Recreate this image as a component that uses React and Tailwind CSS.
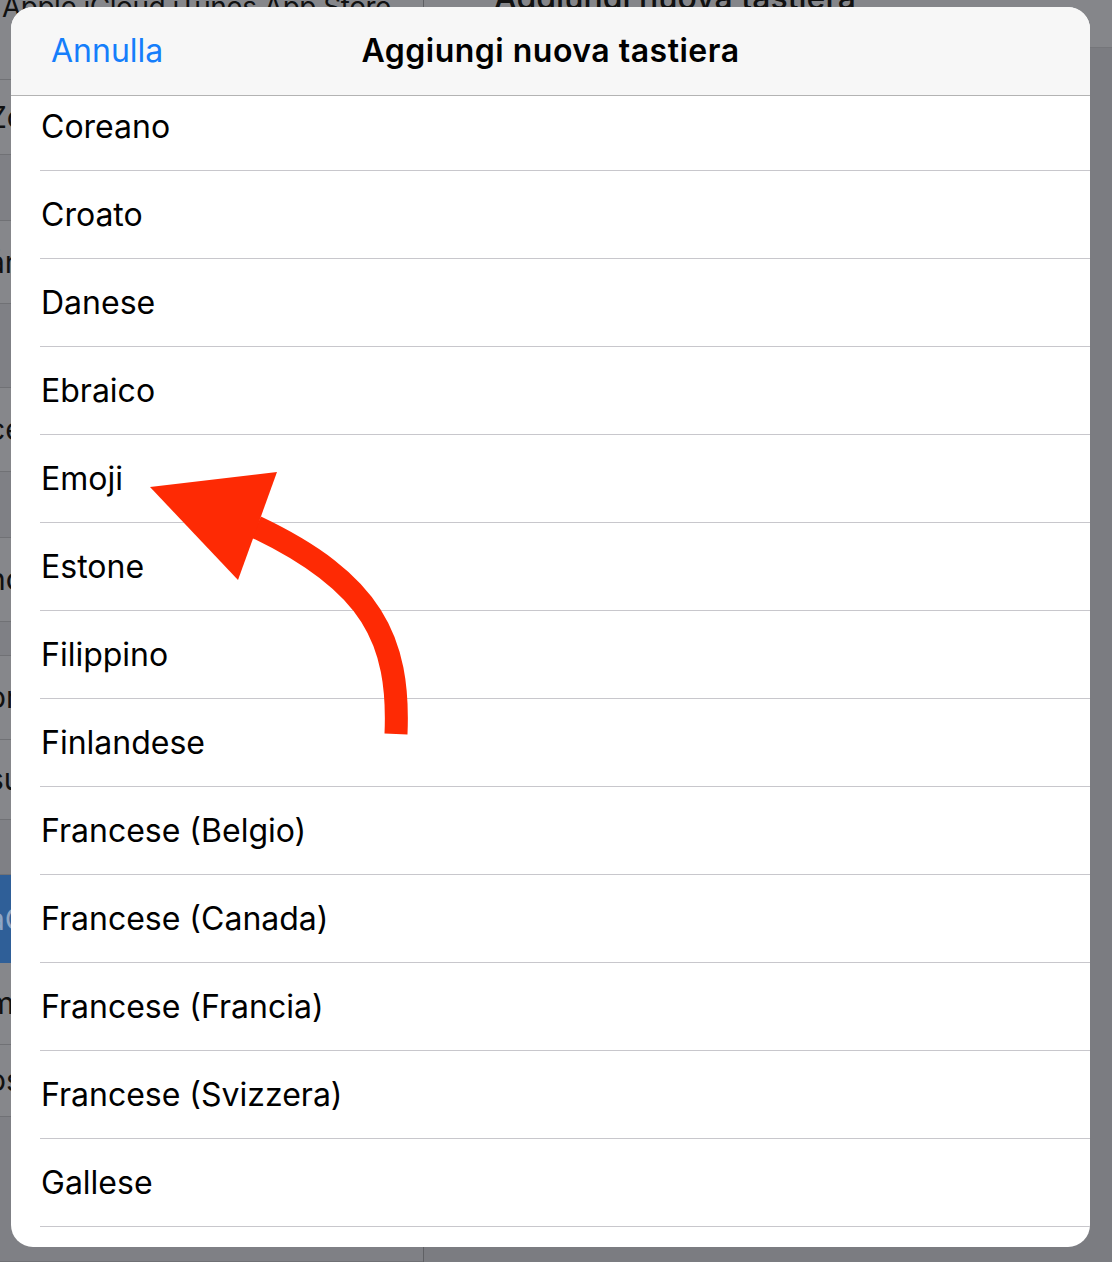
import React from 'react';

const languages = [
  'Coreano',
  'Croato',
  'Danese',
  'Ebraico',
  'Emoji',
  'Estone',
  'Filippino',
  'Finlandese',
  'Francese (Belgio)',
  'Francese (Canada)',
  'Francese (Francia)',
  'Francese (Svizzera)',
  'Gallese',
  'Giapponese',
];

// dimmed settings sidebar behind the sheet: [height, kind, label]
const sideRows = [
  [80, 'row', 'Apple iCloud iTunes App Store'],
  [75, 'row', 'Zona'],
  [66, 'gap', ''],
  [83, 'row', 'ándroid'],
  [84, 'gap', ''],
  [84, 'row', 'cellulare'],
  [66, 'gap', ''],
  [84, 'row', 'hotspot'],
  [34, 'gap', ''],
  [84, 'row', 'ore'],
  [80, 'row', 'suoni'],
  [55, 'gap', ''],
  [88, 'sel', 'aGenerale'],
  [82, 'row', 'muro'],
  [72, 'row', 'oscura'],
  [145, 'gap', ''],
];

function Sidebar() {
  return (
    <div className="w-[424px] shrink-0 bg-[#86878b] border-r border-[#5f6064] flex flex-col">
      {sideRows.map(([h, kind, label], i) => (
        <div
          key={i}
          style={{ height: h }}
          className={
            kind === 'sel'
              ? 'bg-[#2f5f98] text-[#8fa6c4] flex items-center px-[2px] text-[30px] shrink-0'
              : kind === 'gap'
              ? 'bg-[#7f8085] border-b border-[#707175] shrink-0'
              : 'border-b border-[#707175] text-[#111] flex items-center px-[2px] text-[30px] shrink-0'
          }
        >
          {i === 0 ? (
            <span className="-mt-[66px] text-[28px] tracking-[-0.5px]">{label}</span>
          ) : (
            <span className="-ml-[14px]">{label}</span>
          )}
        </div>
      ))}
    </div>
  );
}

function Arrow() {
  return (
    <svg
      className="absolute left-0 top-0 pointer-events-none"
      width="1112"
      height="1262"
      viewBox="0 0 1112 1262"
    >
      <path
        d="M396 734 C400 640 372 582 256 527"
        fill="none"
        stroke="#fe2a04"
        strokeWidth="23"
      />
      <polygon points="150,487 277,472 238,580" fill="#fe2a04" />
    </svg>
  );
}

export default function App() {
  return (
    <div
      className="relative w-[1112px] h-[1262px] overflow-hidden flex"
      style={{ fontFamily: 'Inter, "Liberation Sans", sans-serif' }}
    >
      <Sidebar />
      <div className="flex-1 bg-[#7b7c81] flex flex-col">
        <div className="h-[48px] bg-[#85868a] border-b border-[#75767a] overflow-hidden flex">
          <span className="-mt-[26px] pl-[70px] text-[32px] text-[#111] font-medium">
            Aggiungi nuova tastiera
          </span>
        </div>
      </div>

      {/* modal sheet */}
      <div className="absolute left-[11px] top-[7px] w-[1079px] h-[1240px] rounded-[22px] bg-white overflow-hidden flex flex-col">
        <div className="h-[89px] shrink-0 bg-[#f7f7f7] border-b border-[#b3b3b3] relative flex items-center justify-center">
          <span className="absolute left-[40px] text-[32px] text-[#157efb]">Annulla</span>
          <span className="text-[32px] font-semibold text-black tracking-[0.5px]">
            Aggiungi nuova tastiera
          </span>
        </div>
        <div className="flex-1 overflow-hidden">
          <div className="-mt-[13px]">
            {languages.map((l) => (
              <div
                key={l}
                className="ml-[29px] h-[88px] border-b border-[#c8c7cc] flex items-center text-[32px] text-black"
              >
                <span className="pl-[1px]">{l}</span>
              </div>
            ))}
          </div>
        </div>
      </div>

      <Arrow />
    </div>
  );
}
